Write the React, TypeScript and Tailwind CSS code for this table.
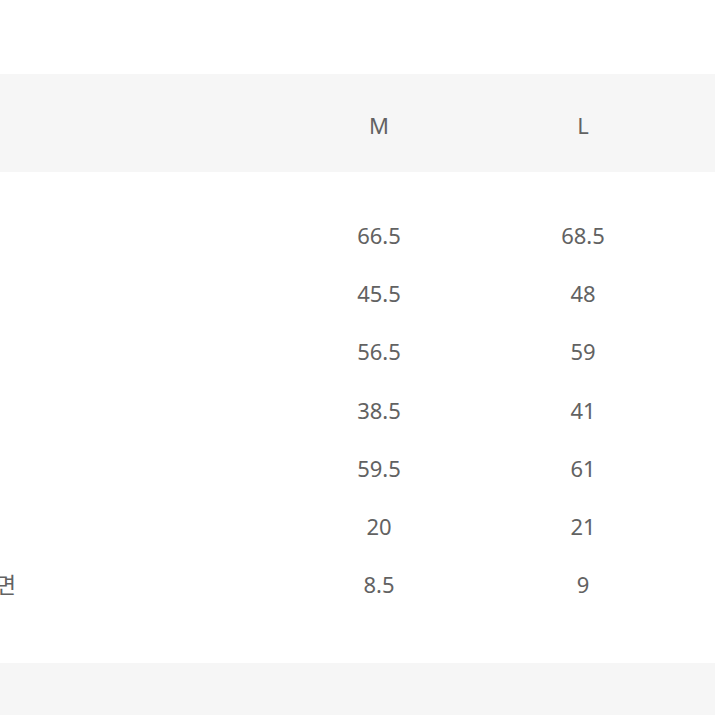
const sizes = ["M", "L"];

const rows = [
  { label: "", values: ["66.5", "68.5"] },
  { label: "", values: ["45.5", "48"] },
  { label: "", values: ["56.5", "59"] },
  { label: "", values: ["38.5", "41"] },
  { label: "", values: ["59.5", "61"] },
  { label: "", values: ["20", "21"] },
  { label: "소매 끝단면", values: ["8.5", "9"] },
];

export default function App() {
  return (
    <div className="h-[715px] w-[715px] overflow-hidden bg-white font-['Noto_Sans','Noto_Sans_CJK_KR',sans-serif] text-[22px] text-[#626262]">
      <div className="h-[74px]" />
      <div className="-ml-[362px] w-[1077px]">
        <div className="flex h-[98px] items-center bg-[#f6f6f6] pt-[4px]">
          <div className="w-[639px] shrink-0" />
          {sizes.map((s) => (
            <div key={s} className="w-[204px] shrink-0 text-center leading-none">
              {s}
            </div>
          ))}
        </div>
        <div className="pt-[34px] pb-[50px]">
          {rows.map((r, idx) => (
            <div key={idx} className="flex h-[58.2px] items-center">
              <div className="w-[639px] shrink-0 pl-[10px] text-center leading-none">{r.label}</div>
              {r.values.map((v, i) => (
                <div key={i} className="w-[204px] shrink-0 text-center leading-none">
                  {v}
                </div>
              ))}
            </div>
          ))}
        </div>
        <div className="h-[60px] bg-[#f6f6f6]" />
      </div>
    </div>
  );
}
